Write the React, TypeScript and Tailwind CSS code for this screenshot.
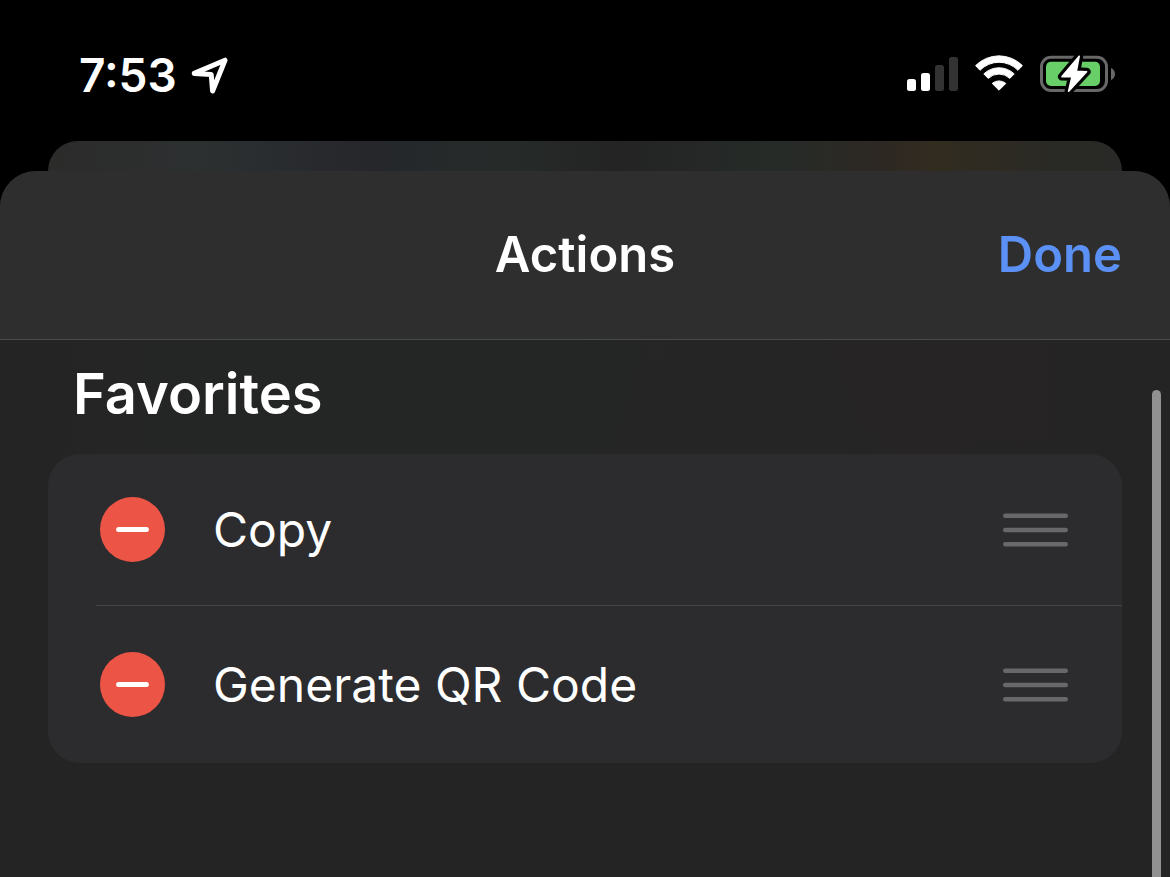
const actions = ["Copy", "Generate QR Code"];

function LocationArrow() {
  return (
    <svg className="h-[38px] w-[38px]" viewBox="0 0 38 38" fill="none" aria-hidden="true">
      <path
        d="M3.2 17.4 L34 4.2 L21.6 35 L20.2 18.4 Z"
        stroke="#fff"
        strokeWidth="5"
        strokeLinejoin="round"
      />
    </svg>
  );
}

function SignalBars() {
  return (
    <svg className="h-9 w-[51px]" viewBox="0 0 51 36" aria-hidden="true">
      <rect x="0" y="23" width="9" height="12" rx="2.5" fill="#fff" />
      <rect x="14" y="17" width="9" height="18" rx="2.5" fill="#fff" />
      <rect x="28" y="9" width="9" height="26" rx="2.5" fill="#333" />
      <rect x="42" y="1" width="9" height="34" rx="2.5" fill="#333" />
    </svg>
  );
}

function Wifi() {
  return (
    <svg className="h-9 w-12" viewBox="0 0 48 36" fill="#fff" stroke="#fff" strokeLinejoin="round" aria-hidden="true">
      <path d="M.6 10.6 A33 33 0 0 1 47.4 10.6 L43 15.3 A26.5 26.5 0 0 0 5 15.3 Z" />
      <path d="M8.8 18.9 A22 22 0 0 1 39.2 18.9 L34.8 23.4 A15.6 15.6 0 0 0 13.2 23.4 Z" />
      <path d="M17.2 28.4 A10.5 10.5 0 0 1 30.8 28.4 L24 35.2 Z" />
    </svg>
  );
}

function Battery() {
  const bolt = "M39.2 1.2 L22 21.6 L32 21.8 L28.6 36.2 L46.6 16.8 L36.4 16.2 Z";
  return (
    <svg className="h-[38px] w-[75px]" viewBox="0 0 75 38" aria-hidden="true">
      <rect x="1.5" y="2.2" width="65" height="33.3" rx="9.5" fill="none" stroke="#686868" strokeWidth="3" />
      <path d="M71 13 C76.3 15 76.3 23 71 25 Z" fill="#686868" />
      <rect x="6" y="6.8" width="54" height="24.2" rx="5" fill="#68ce67" />
      <path d={bolt} fill="#000" stroke="#000" strokeWidth="8" strokeLinejoin="round" />
      <path d={bolt} fill="#fff" stroke="#fff" strokeWidth="1.6" strokeLinejoin="round" />
    </svg>
  );
}

function RemoveIcon() {
  return (
    <svg className="h-[65px] w-[65px]" viewBox="0 0 65 65" aria-hidden="true">
      <circle cx="32.5" cy="32.5" r="32.5" fill="#ec5545" />
      <path d="M18.6 32.5 H46.4" stroke="#fff" strokeWidth="5" strokeLinecap="round" />
    </svg>
  );
}

function GripIcon() {
  return (
    <svg className="h-[34px] w-[65px]" viewBox="0 0 65 34" aria-hidden="true">
      <path d="M2.2 2.7 H62.8 M2.2 17 H62.8 M2.2 31.3 H62.8" stroke="#68686a" strokeWidth="4.4" strokeLinecap="round" />
    </svg>
  );
}

export default function App() {
  return (
    <div className="flex min-h-screen flex-col bg-black font-[Inter,'Liberation_Sans',sans-serif] text-white">
      <div className="flex h-[141px] items-start justify-between pl-[79px] pr-[55px] pt-[55px]">
        <div className="flex items-center gap-[14px]">
          <time className="text-[46px] leading-10 font-semibold">7:53</time>
          <LocationArrow />
        </div>
        <div className="flex items-start gap-[17px]">
          <div className="pt-px"><SignalBars /></div>
          <Wifi />
          <Battery />
        </div>
      </div>

      <div className="mx-12 h-[30px] rounded-t-[30px] bg-[linear-gradient(90deg,#2b2b2a_0%,#2d3031_14%,#25272b_30%,#262b2a_42%,#232423_53%,#262b28_68%,#2e2823_78%,#322c20_83%,#292925_94%,#292927_100%)]" />

      <main className="relative flex flex-1 flex-col overflow-hidden rounded-t-[36px] bg-[#242424]">
        <header className="grid h-[169px] grid-cols-[1fr_auto_1fr] items-center border-b border-[#4a4b4b] bg-[#2e2e2e] px-12">
          <h1 className="col-start-2 text-[49px] leading-[60px] font-semibold">Actions</h1>
          <button type="button" className="justify-self-end text-[49px] leading-[60px] font-semibold text-[#5b91f5]">
            Done
          </button>
        </header>

        <section className="flex-1 bg-[linear-gradient(180deg,#24242400_0%,#242424_75%),linear-gradient(90deg,#242424_0%,#242625_25%,#242625_50%,#272425_80%,#242424_100%)] px-12">
          <h2 className="px-[25px] pt-[18px] pb-6 text-[56px] leading-[72px] font-semibold">Favorites</h2>
          <ul className="overflow-hidden rounded-[32px] bg-[#2c2c2e]">
            {actions.map((name) => (
              <li key={name} className="group pl-12">
                <div className="flex h-[157px] items-center border-[#434345] pr-[54px] pl-1 group-not-last:h-[152px] group-not-last:border-b">
                  <button type="button" aria-label={`Remove ${name}`}>
                    <RemoveIcon />
                  </button>
                  <span className="flex-1 pl-12 text-[48px] leading-[60px]">{name}</span>
                  <button type="button" aria-label={`Reorder ${name}`}>
                    <GripIcon />
                  </button>
                </div>
              </li>
            ))}
          </ul>
        </section>
        <div className="absolute top-[219px] right-[9px] -bottom-3 w-[9px] rounded-full bg-[#919191]" />
      </main>
    </div>
  );
}
